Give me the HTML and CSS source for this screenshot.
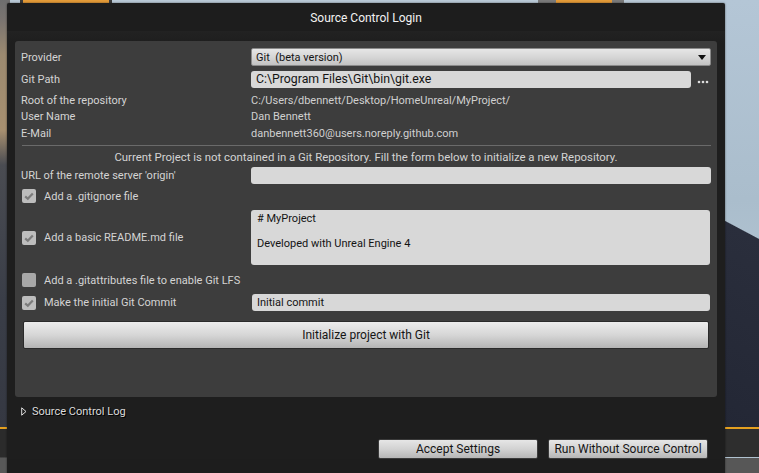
FILE: index.html
```html
<!DOCTYPE html>
<html>
<head>
<meta charset="utf-8">
<link rel="stylesheet" href="styles.css">
</head>
<body>
<div class="desktop">
  <div class="bg bg-left"></div>
  <div class="bg bg-right"></div>
  <div class="bg bg-building"></div>
  <div class="bg bg-icon1"></div>
  <div class="bg bg-icon2"></div>
  <div class="bg bg-orange-l"></div>
  <div class="bg bg-orange-r"></div>
  <div class="bg bg-bar-l"></div>
  <div class="bg bg-bar-r"></div>
</div>

<div class="window">
  <div class="titlebar">Source Control Login</div>
  <div class="content">
    <div class="panel">
      <div class="row r-provider">
        <div class="label">Provider</div>
        <div class="combo"><span>Git&nbsp; (beta version)</span><svg class="arrow" width="8" height="5" viewBox="0 0 8 5"><path d="M0 0 H8 L4 5 Z" fill="#111"/></svg></div>
      </div>
      <div class="row r-gitpath">
        <div class="label">Git Path</div>
        <div class="pathcell">
          <div class="input big">C:\Program Files\Git\bin\git.exe</div>
          <svg class="dots" width="12" height="4" viewBox="0 0 12 4"><circle cx="2" cy="2" r="1.3" fill="#ddd"/><circle cx="6" cy="2" r="1.3" fill="#ddd"/><circle cx="10" cy="2" r="1.3" fill="#ddd"/></svg>
        </div>
      </div>
      <div class="row r-info r-root">
        <div class="label">Root of the repository</div>
        <div class="value">C:/Users/dbennett/Desktop/HomeUnreal/MyProject/</div>
      </div>
      <div class="row r-info r-tall">
        <div class="label">User Name</div>
        <div class="value">Dan Bennett</div>
      </div>
      <div class="row r-info r-tall">
        <div class="label">E-Mail</div>
        <div class="value">danbennett360@users.noreply.github.com</div>
      </div>
      <div class="sep"></div>
      <div class="notice">Current Project is not contained in a Git Repository. Fill the form below to initialize a new Repository.</div>
      <div class="row r-url">
        <div class="label">URL of the remote server 'origin'</div>
        <div class="input"></div>
      </div>
      <div class="row r-check r-ignore">
        <div class="checklabel">
          <span class="cb"><svg width="14" height="14" viewBox="0 0 14 14"><path d="M3.2 7.4 L5.8 9.8 L10.8 4.4" fill="none" stroke="#7b7b7b" stroke-width="2.2"/></svg></span>
          <span>Add a .gitignore file</span>
        </div>
      </div>
      <div class="row r-readme">
        <div class="checklabel">
          <span class="cb"><svg width="14" height="14" viewBox="0 0 14 14"><path d="M3.2 7.4 L5.8 9.8 L10.8 4.4" fill="none" stroke="#7b7b7b" stroke-width="2.2"/></svg></span>
          <span>Add a basic README.md file</span>
        </div>
        <div class="textarea"># MyProject<br><br>Developed with Unreal Engine 4</div>
      </div>
      <div class="row r-check r-attr">
        <div class="checklabel">
          <span class="cb"></span>
          <span>Add a .gitattributes file to enable Git LFS</span>
        </div>
      </div>
      <div class="row r-commit">
        <div class="checklabel">
          <span class="cb"><svg width="14" height="14" viewBox="0 0 14 14"><path d="M3.2 7.4 L5.8 9.8 L10.8 4.4" fill="none" stroke="#7b7b7b" stroke-width="2.2"/></svg></span>
          <span>Make the initial Git Commit</span>
        </div>
        <div class="input commit">Initial commit</div>
      </div>
      <div class="initbtn">Initialize project with Git</div>
    </div>
    <div class="log">
      <svg width="6" height="9" viewBox="0 0 6 9"><path d="M0.7 0.8 L5 4.5 L0.7 8.2 Z" fill="none" stroke="#ddd" stroke-width="1"/></svg>
      <span>Source Control Log</span>
    </div>
    <div class="footer">
      <div class="btn">Accept Settings</div>
      <div class="btn">Run Without Source Control</div>
    </div>
  </div>
</div>
</body>
</html>
```

FILE: styles.css
```css
html, body {
  margin: 0;
  padding: 0;
  width: 759px;
  height: 473px;
  overflow: hidden;
  font-family: Roboto, "Liberation Sans", sans-serif;
}
body {
  background: #b9c9d6;
  position: relative;
}
.desktop .bg { position: absolute; }
.bg-left {
  left: 0; top: 0; width: 10px; height: 473px;
  background: linear-gradient(180deg, #6e6e6e 0px, #7a7470 20px, #9c8a70 55px, #a89070 130px, #4a4c52 165px, #3a3e48 300px, #353842 428px, #2d2d2d 430px, #2d2d2d 457px, #585858 458px);
}
.bg-right {
  left: 720px; top: 0; width: 39px; height: 473px;
  background: linear-gradient(180deg, #b4c6d6 0px, #aabdcc 200px, #b0c2d0 260px);
}
.bg-building {
  left: 720px; top: 218px; width: 39px; height: 209px;
  background: linear-gradient(208deg, transparent 0 18px, #2a2e3c 19px, #232735 100%);
}
.bg-icon1 {
  left: 20px; top: 0; width: 86px; height: 4px;
  background: #e39a38;
  border-left: 3px solid #3a3a3a;
  border-right: 3px solid #3a3a3a;
}
.bg-icon2 {
  left: 538px; top: 0; width: 86px; height: 4px;
  background: #7a7a7a;
}
.bg-icon2::after {
  content: ""; position: absolute; left: 18px; top: 0; width: 56px; height: 4px; background: #e39a38;
}
.bg-orange-l { left: 0; top: 427px; width: 10px; height: 2px; background: #e4a020; }
.bg-orange-r { left: 720px; top: 427px; width: 39px; height: 2px; background: #e4a020; }
.bg-bar-l { left: 0; top: 429px; width: 10px; height: 28px; background: #2b2b2b; }
.bg-bar-r { left: 720px; top: 429px; width: 39px; height: 28px; background: #2e2e2e; }
.bg-bar-r::after { content: ""; position: absolute; left: 0; top: 29px; width: 39px; height: 20px; background: #575757; }

.window {
  position: absolute;
  left: 7px;
  top: 3px;
  width: 718px;
  height: 480px;
  background: #1d1d1d;
  border-radius: 2px 2px 0 0;
  box-shadow: 0 0 2px rgba(0,0,0,0.6);
}
.titlebar {
  height: 28px;
  line-height: 30px;
  text-align: center;
  color: #f2f2f2;
  font-size: 12px;
}
.content {
  padding: 10px 8px 0 8px;
  background: linear-gradient(180deg, #222 0px, #1e1e1e 12px);
}
.panel {
  background: #3d3d3d;
  border-radius: 3px;
  height: 356px;
  box-sizing: border-box;
  padding: 7px 6px 0 6px;
  display: flex;
  flex-direction: column;
}
.row {
  display: grid;
  grid-template-columns: 230px 1fr;
  align-items: center;
  font-size: 11px;
  color: #d4d4d4;
}
.label { white-space: nowrap; }
.r-provider { height: 18px; }
.combo {
  height: 18px;
  box-sizing: border-box;
  border: 1px solid #8a8a8a;
  border-radius: 2px;
  background: linear-gradient(180deg, #e6e6e6 0%, #d6d6d6 50%, #c2c2c2 100%);
  color: #151515;
  display: flex;
  align-items: center;
  justify-content: space-between;
  padding: 0 4px 0 4px;
}
.r-gitpath { height: 17px; margin-top: 5px; }
.pathcell { display: flex; align-items: center; }
.pathcell .input { flex: 1; }
.dots { margin-left: 6px; margin-right: 2px; margin-top: 5px; }
.input {
  height: 17px;
  box-sizing: border-box;
  background: #d8d8d8;
  border-radius: 3px;
  color: #141414;
  padding: 0 5px;
  line-height: 17px;
  font-size: 11px;
}
.input.big { font-size: 12.3px; }
.r-info { height: 16px; }
.r-root { margin-top: 4px; }
.r-tall { height: 17px; }
.value { color: #d0d0d0; }
.sep {
  height: 1px;
  background: #6a6a6a;
  margin: 3px 0 0 1px;
}
.notice {
  margin-top: 4px;
  height: 14px;
  line-height: 14px;
  text-align: center;
  font-size: 11.4px;
  color: #d4d4d4;
}
.r-url { height: 17px; margin-top: 3px; }
.r-ignore { height: 16px; margin-top: 4px; }
.checklabel {
  display: flex;
  align-items: center;
  gap: 8px;
  padding-left: 1px;
  white-space: nowrap;
}
.cb {
  width: 14px;
  height: 14px;
  box-sizing: border-box;
  border-radius: 2px;
  background: #bdbdbd;
  display: block;
  flex: none;
}
.cb svg { display: block; }
.r-attr .cb { background: #a8a8a8; }
.r-readme { margin-top: 6px; height: 55px; }
.textarea {
  height: 55px;
  box-sizing: border-box;
  background: #d8d8d8;
  border-radius: 3px;
  color: #141414;
  padding: 3px 6px;
  line-height: 12.5px;
  font-size: 11px;
  margin-right: 1px;
}
.r-attr { height: 16px; margin-top: 7px; }
.r-commit { height: 17px; margin-top: 6px; }
.input.commit { margin-left: 1px; margin-right: 1px; }
.initbtn {
  margin: 10px 2px 0 2px;
  height: 28px;
  box-sizing: border-box;
  border: 1px solid #2a2a2a;
  border-radius: 2px;
  background: linear-gradient(180deg, #ececec 0%, #d6d6d6 50%, #b4b4b4 100%);
  color: #151515;
  font-size: 12px;
  display: flex;
  align-items: center;
  justify-content: center;
}
.log {
  display: flex;
  align-items: center;
  gap: 5px;
  height: 16px;
  margin-top: 6px;
  padding-left: 6px;
  font-size: 11px;
  color: #dcdcdc;
  text-shadow: 1px 1px 0 #000;
}
.footer {
  display: flex;
  justify-content: flex-end;
  gap: 10px;
  margin-top: 20px;
  padding-right: 9px;
}
.btn {
  width: 160px;
  height: 20px;
  box-sizing: border-box;
  border: 1px solid #3a3a3a;
  border-radius: 2px;
  background: linear-gradient(180deg, #e6e6e6 0%, #d2d2d2 50%, #b6b6b6 100%);
  color: #151515;
  font-size: 12px;
  display: flex;
  align-items: center;
  justify-content: center;
}
```
